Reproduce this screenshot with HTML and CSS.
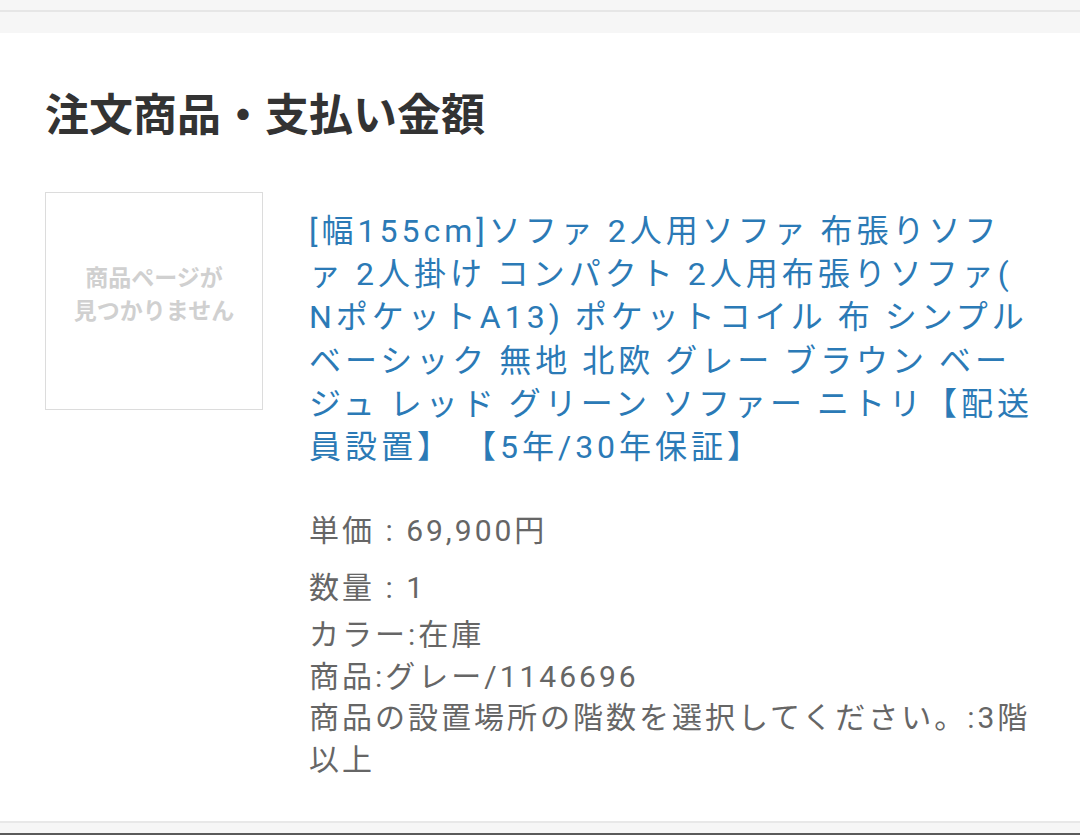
FILE: index.html
```html
<!DOCTYPE html>
<html lang="ja">
<head>
<meta charset="utf-8">
<link rel="stylesheet" href="styles.css">
</head>
<body>
<div class="prev-end"></div>
<div class="gap"></div>
<section class="order">
  <h2 class="order-title">注文商品・支払い金額</h2>
  <div class="item">
    <div class="thumb">
      <span class="thumb-text">商品ページが<br>見つかりません</span>
    </div>
    <div class="info">
      <a class="item-name" href="#">[幅155cm]ソファ 2人用ソファ 布張りソフ<br>ァ 2人掛け コンパクト 2人用布張りソファ(<br>NポケットA13) ポケットコイル 布 シンプル<br>ベーシック 無地 北欧 グレー ブラウン ベー<br>ジュ レッド グリーン ソファー ニトリ【配送<br>員設置】 【5年/30年保証】</a>
      <p class="price">単価 : 69,900円</p>
      <p class="qty">数量 : 1</p>
      <div class="options">
        <p>カラー:在庫</p>
        <p>商品:グレー/1146696</p>
        <p>商品の設置場所の階数を選択してください。:3階以上</p>
      </div>
    </div>
  </div>
</section>
<div class="bottom-gap"></div>
<div class="bottom-bar"></div>
</body>
</html>
```

FILE: styles.css
```css
html, body {
  margin: 0;
  padding: 0;
  background: #ffffff;
}
body {
  width: 1080px;
  height: 836px;
  overflow: hidden;
  font-family: "Roboto", "Noto Sans CJK JP", sans-serif;
}
.prev-end {
  height: 10px;
  background: #f6f6f6;
  border-bottom: 2px solid #e6e6e6;
}
.gap {
  height: 21px;
  background: #f6f6f6;
}
.order {
  padding: 49px 45px 41px 45px;
  background: #ffffff;
  border-bottom: 2px solid #e8e8e8;
}
.order-title {
  margin: 0;
  font-family: "Noto Sans CJK JP", sans-serif;
  font-size: 44px;
  line-height: 60px;
  font-weight: 700;
  color: #333333;
}
.item {
  display: flex;
  align-items: flex-start;
  gap: 46px;
  margin-top: 50px;
}
.thumb {
  flex: 0 0 auto;
  width: 216px;
  height: 216px;
  border: 1px solid #dcdcdc;
  display: flex;
  align-items: center;
  justify-content: center;
}
.thumb-text {
  font-family: "Noto Sans CJK JP", sans-serif;
  font-size: 23px;
  line-height: 33px;
  font-weight: 700;
  color: #d0d0d0;
  text-align: center;
  margin-top: -16px;
}
.info {
  flex: 1 1 auto;
  padding-top: 18px;
  margin-right: -12px;
}
.item-name {
  display: block;
  font-size: 32px;
  line-height: 43.2px;
  letter-spacing: 4px;
  word-spacing: -1px;
  color: #2b7ab6;
  text-decoration: none;
  line-break: anywhere;
}
.options {
  margin-right: 12px;
}
.price, .qty, .options p {
  margin: 0;
  font-size: 30px;
  line-height: 41.5px;
  letter-spacing: 3px;
  color: #666666;
}
.options p {
  line-break: anywhere;
}
.price {
  margin-top: 41px;
  margin-bottom: 15px;
}
.qty {
  margin-bottom: 6px;
}
.bottom-gap {
  height: 10px;
  background: #f6f6f6;
}
.bottom-bar {
  height: 2px;
  background: #5a5a5a;
}
```
